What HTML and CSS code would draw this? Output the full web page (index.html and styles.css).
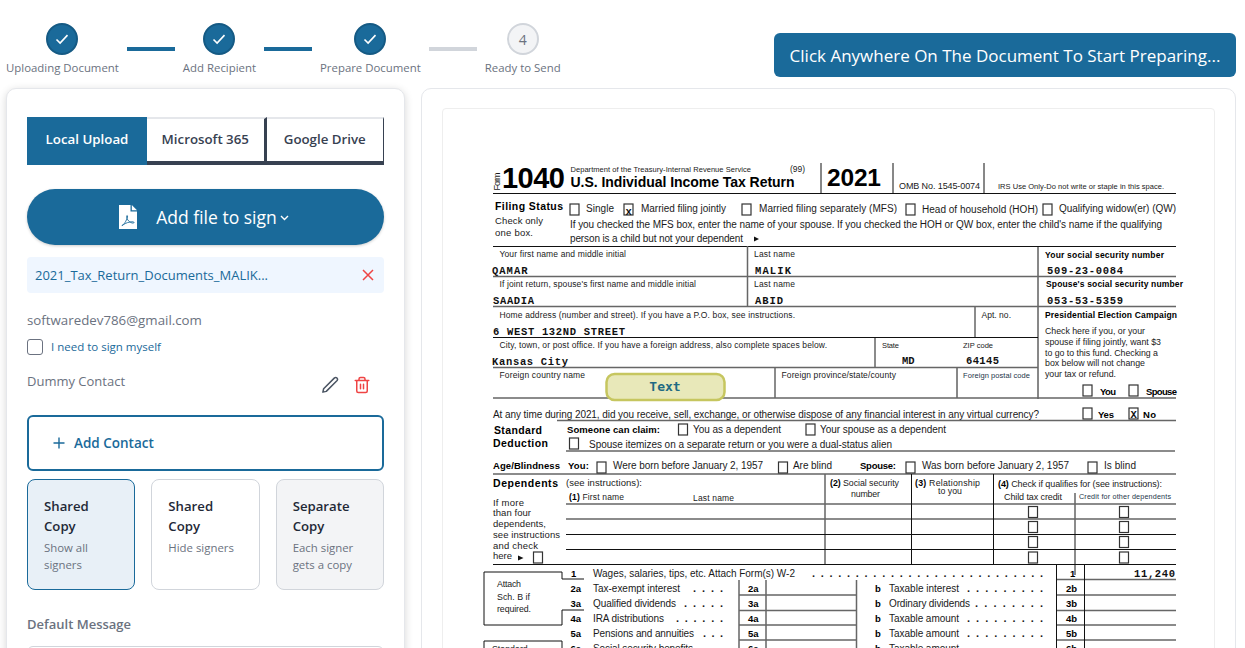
FILE: index.html
```html
<!DOCTYPE html>
<html lang="en">
	<head>
		<meta charset="UTF-8" />
		<meta name="viewport" content="width=device-width, initial-scale=1.0" />
		<title>Prepare Document</title>
		<link rel="stylesheet" href="styles.css">
	</head>
	<body>
		<header class="topbar">
			<ol class="stepper">
				<li class="step">
					<span class="step-dot"><svg width="14" height="14" viewBox="0 0 14 14"><path d="M1.5 7.5l3.6 3.6 7.4-8" /></svg></span>
					<span class="step-label">Uploading Document</span>
				</li>
				<li class="step-line"></li>
				<li class="step">
					<span class="step-dot"><svg width="14" height="14" viewBox="0 0 14 14"><path d="M1.5 7.5l3.6 3.6 7.4-8" /></svg></span>
					<span class="step-label">Add Recipient</span>
				</li>
				<li class="step-line"></li>
				<li class="step">
					<span class="step-dot"><svg width="14" height="14" viewBox="0 0 14 14"><path d="M1.5 7.5l3.6 3.6 7.4-8" /></svg></span>
					<span class="step-label">Prepare Document</span>
				</li>
				<li class="step-line step-line-todo"></li>
				<li class="step">
					<span class="step-dot step-dot-todo">4</span>
					<span class="step-label">Ready to Send</span>
				</li>
			</ol>
			<button class="hint-button">Click Anywhere On The Document To Start Preparing...</button>
		</header>

		<main class="workspace">
			<aside class="panel side">
				<div class="tabs">
					<button class="tab tab-active">Local Upload</button>
					<button class="tab">Microsoft 365</button>
					<button class="tab">Google Drive</button>
				</div>

				<button class="add-file">
					<svg class="pdf-icon" width="18" height="24" viewBox="0 0 18 24">
						<path class="pdf-sheet" d="M0 0h11.5v6.500h6.500v17.500h-18z" />
						<path class="pdf-sheet" d="M12.800 0l5.200 5.200h-5.200z" />
						<path class="pdf-mark" d="M3 20.500c2-.8 4.300-4.500 5.500-8.500.5-1.800-.9-2-.9-.4 0 3 3.400 6.300 6.300 6.500 1.500.1 1.500-1.200 0-1.300-3.600-.2-7.400 1.300-9.700 3-1 .8-1.600.8-1.200.7z" />
					</svg>
					<span>Add file to sign</span>
					<svg class="chevron" width="9" height="6" viewBox="0 0 9 6"><path d="M1 1l3.500 3.500L8 1" /></svg>
				</button>

				<div class="file-row">
					<span class="file-name">2021_Tax_Return_Documents_MALIK...</span>
					<svg class="file-remove" width="12" height="12" viewBox="0 0 12 12"><path d="M1 1l10 10M11 1L1 11" /></svg>
				</div>

				<div class="email">softwaredev786@gmail.com</div>
				<label class="self-sign">
					<span class="checkbox"></span>
					<span class="self-sign-text">I need to sign myself</span>
				</label>

				<div class="contact">
					<span class="contact-name">Dummy Contact</span>
					<span class="contact-actions">
						<svg class="icon-edit" width="18" height="18" viewBox="0 0 24 24"><path d="M18 2.500a2.500 2.500 0 0 1 3.500 3.500L7 20.500 2.500 21.500 3.500 17z" /></svg>
						<svg class="icon-trash" width="18" height="18" viewBox="0 0 24 24"><path d="M3 6h18M8 6V4a2 2 0 0 1 2-2h4a2 2 0 0 1 2 2v2M19 6v14a2 2 0 0 1-2 2H7a2 2 0 0 1-2-2V6M10 11v6M14 11v6" /></svg>
					</span>
				</div>

				<button class="add-contact">
					<svg width="12" height="12" viewBox="0 0 12 12"><path d="M6 .5v11M.5 6h11" /></svg>
					<span>Add Contact</span>
				</button>

				<div class="copy-options">
					<div class="copy-card copy-card-active">
						<div class="copy-title">Shared Copy</div>
						<div class="copy-text">Show all signers</div>
					</div>
					<div class="copy-card">
						<div class="copy-title">Shared Copy</div>
						<div class="copy-text">Hide signers</div>
					</div>
					<div class="copy-card copy-card-muted">
						<div class="copy-title">Separate Copy</div>
						<div class="copy-text">Each signer gets a copy</div>
					</div>
				</div>

				<div class="field-label">Default Message</div>
				<div class="message-box"></div>
			</aside>

			<section class="panel viewer">
				<div class="sheet">
					<!-- the viewBox uses window coordinates, the form is a free canvas -->
					<svg class="form" width="771" height="539" viewBox="443 109 771 539">
						<!-- heavy rules -->
						<g class="rule">
							<path d="M493 193.500H1176M821 163V194M893 163V194M984 163V194M493 246.500H1176" />
							<path d="M493 337.500H1038M1038 246V399M957 368V398" />
							<path d="M562 572H484V625H562V610H584M562 572V579H584M484 648V641H562V648" />
						</g>
						<!-- grey rules -->
						<g class="rule-soft">
							<path d="M493 276.500H1176M493 306.500H1176M747.500 246V307M975 307V337M875 338V367M493 367.500H1038M775 368V398M493 398H1176" />
							<path d="M557 420.500H1176M566 451H1175M493 474H1176" />
							<path d="M566 504H1176M566 519H1176M825 474V565M1075 493V575" />
							<path d="M739 580V648M766 580V648M856.500 580V648M739 595H857M739 610.500H857M739 625H857M739 640H857" />
							<path d="M1057 595H1176M1057 610.500H1176M1057 625H1176M1057 640H1176M1057 579.500H1176" />
						</g>
						<g class="rule">
							<path d="M566 534.500H1176M566 549.500H1176M493 564.500H1176M911.500 474V565M993.500 474V565M1056.500 565V648M1084.500 565V648" />
						</g>

						<!-- header -->
						<text class="f" font-size="9" transform="translate(499.500 190.500) rotate(-90)" textLength="18">Form</text>
						<text class="f b" x="502" y="188" font-size="29" textLength="63">1040</text>
						<text class="f" x="570.500" y="172" font-size="7.500" textLength="180.500">Department of the Treasury-Internal Revenue Service</text>
						<text class="f" x="790" y="172" font-size="8.500" textLength="15">(99)</text>
						<text class="f b" x="570.500" y="186.500" font-size="14" textLength="224">U.S. Individual Income Tax Return</text>
						<text class="f b" x="827" y="186" font-size="24.500" textLength="54">2021</text>
						<text class="f" x="899" y="189" font-size="9" textLength="81">OMB No. 1545-0074</text>
						<text class="f" x="998" y="189" font-size="7.500" textLength="166">IRS Use Only-Do not write or staple in this space.</text>

						<!-- filing status -->
						<text class="f b" x="495" y="210" font-size="10.500" textLength="68">Filing Status</text>
						<text class="f" x="495" y="224" font-size="9.500" textLength="48">Check only</text>
						<text class="f" x="495" y="236" font-size="9.500" textLength="38">one box.</text>
						<text class="f" x="586" y="212" font-size="10" textLength="28">Single</text>
						<text class="f" x="641" y="212" font-size="10" textLength="85">Married filing jointly</text>
						<text class="f" x="759" y="212" font-size="10" textLength="138">Married filing separately (MFS)</text>
						<text class="f" x="922" y="213" font-size="10" textLength="116">Head of household (HOH)</text>
						<text class="f" x="1059" y="212" font-size="10" textLength="117">Qualifying widow(er) (QW)</text>
						<text class="f" x="570" y="228" font-size="10" textLength="592">If you checked the MFS box, enter the name of your spouse. If you checked the HOH or QW box, enter the child's name if the qualifying</text>
						<text class="f" x="570" y="242" font-size="10" textLength="173">person is a child but not your dependent</text>
						<path class="mark" d="M754 236.500l5 2.500-5 2.500z" />

						<!-- names -->
						<text class="f" x="499.500" y="257" font-size="8.500" textLength="126.500">Your first name and middle initial</text>
						<text class="f" x="754" y="257" font-size="8.500" textLength="41">Last name</text>
						<text class="f b" x="1045" y="257.500" font-size="8.500" textLength="119">Your social security number</text>
						<text class="m" x="492" y="274" textLength="35.500">QAMAR</text>
						<text class="m" x="755" y="274" textLength="36">MALIK</text>
						<text class="m" x="1047" y="274" textLength="76">509-23-0084</text>
						<text class="f" x="499.500" y="287" font-size="8.500" textLength="196.500">If joint return, spouse's first name and middle initial</text>
						<text class="f" x="754" y="287" font-size="8.500" textLength="41">Last name</text>
						<text class="f b" x="1046" y="287" font-size="8.500" textLength="137">Spouse's social security number</text>
						<text class="m" x="493" y="304" textLength="41">SAADIA</text>
						<text class="m" x="755" y="304" textLength="28">ABID</text>
						<text class="m" x="1047" y="304" textLength="76">053-53-5359</text>

						<!-- address -->
						<text class="f" x="499.500" y="317.500" font-size="8.500" textLength="295.500">Home address (number and street). If you have a P.O. box, see instructions.</text>
						<text class="f" x="981.500" y="318" font-size="8.500" textLength="29.500">Apt. no.</text>
						<text class="f b" x="1045" y="318" font-size="8.500" textLength="132">Presidential Election Campaign</text>
						<text class="m" x="493" y="335" textLength="132">6 WEST 132ND STREET</text>
						<text class="f" x="1045" y="334" font-size="8.800" textLength="100">Check here if you, or your</text>
						<text class="f" x="1045" y="345" font-size="8.800" textLength="116">spouse if filing jointly, want $3</text>
						<text class="f" x="1045" y="355.500" font-size="8.800" textLength="113">to go to this fund. Checking a</text>
						<text class="f" x="1045" y="366" font-size="8.800" textLength="100">box below will not change</text>
						<text class="f" x="1045" y="377" font-size="8.800" textLength="71">your tax or refund.</text>
						<text class="f" x="499.500" y="347.500" font-size="8.500" textLength="327.500">City, town, or post office. If you have a foreign address, also complete spaces below.</text>
						<text class="f" x="882" y="347.500" font-size="7.500" textLength="17">State</text>
						<text class="f" x="963" y="347.500" font-size="7.500" textLength="30">ZIP code</text>
						<text class="m" x="492" y="365" textLength="76">Kansas City</text>
						<text class="m" x="902" y="364">MD</text>
						<text class="m" x="966" y="364" textLength="33">64145</text>
						<text class="f" x="499.500" y="377.500" font-size="8.500" textLength="85.500">Foreign country name</text>
						<text class="f" x="781.500" y="377.500" font-size="8.500" textLength="114.500">Foreign province/state/county</text>
						<text class="f blue" x="963" y="377.500" font-size="7.500" textLength="67">Foreign postal code</text>
						<text class="f b" x="1100" y="395" font-size="9.500" textLength="16">You</text>
						<text class="f b" x="1146" y="395" font-size="9.500" textLength="31">Spouse</text>

						<!-- digital asset question -->
						<text class="f" x="493" y="418" font-size="10" textLength="546">At any time during 2021, did you receive, sell, exchange, or otherwise dispose of any financial interest in any virtual currency?</text>
						<text class="f b" x="1098" y="418" font-size="9.500" textLength="16">Yes</text>
						<text class="f b" x="1143" y="418" font-size="9.500" textLength="13">No</text>

						<!-- standard deduction -->
						<text class="f b" x="494" y="434" font-size="10.500" textLength="48">Standard</text>
						<text class="f b" x="493" y="446.500" font-size="10.500" textLength="55">Deduction</text>
						<text class="f b" x="567" y="433" font-size="9.500" textLength="93">Someone can claim:</text>
						<text class="f" x="693" y="433" font-size="10" textLength="88">You as a dependent</text>
						<text class="f" x="820" y="433" font-size="10" textLength="126">Your spouse as a dependent</text>
						<text class="f" x="589" y="448" font-size="10" textLength="303">Spouse itemizes on a separate return or you were a dual-status alien</text>

						<!-- age and blindness -->
						<text class="f b" x="493" y="469" font-size="9.500" textLength="67">Age/Blindness</text>
						<text class="f b" x="568" y="469" font-size="9.500" textLength="21">You:</text>
						<text class="f" x="613" y="469" font-size="10" textLength="150">Were born before January 2, 1957</text>
						<text class="f" x="793" y="469" font-size="10" textLength="39">Are blind</text>
						<text class="f b" x="860" y="469" font-size="9.500" textLength="36">Spouse:</text>
						<text class="f" x="922" y="469" font-size="10" textLength="147">Was born before January 2, 1957</text>
						<text class="f" x="1104" y="469" font-size="10" textLength="32">Is blind</text>

						<!-- dependents -->
						<text class="f b" x="493" y="487" font-size="10.500" textLength="65">Dependents</text>
						<text class="f" x="566" y="486" font-size="9.500" textLength="76">(see instructions):</text>
						<text class="f" x="569" y="500" font-size="8.500" textLength="55"><tspan class="b">(1)</tspan> First name</text>
						<text class="f" x="693" y="501" font-size="8.500" textLength="41">Last name</text>
						<text class="f" x="493" y="506" font-size="9.500" textLength="31">If more</text>
						<text class="f" x="493" y="516" font-size="9.500" textLength="38">than four</text>
						<text class="f" x="493" y="527" font-size="9.500" textLength="53">dependents,</text>
						<text class="f" x="493" y="538" font-size="9.500" textLength="67">see instructions</text>
						<text class="f" x="493" y="549" font-size="9.500" textLength="45">and check</text>
						<text class="f" x="493" y="559" font-size="9.500" textLength="19">here</text>
						<path class="mark" d="M518 555.500l5.500 2.500-5.500 2.500z" />
						<text class="f" x="830" y="486" font-size="8.800" textLength="69"><tspan class="b">(2)</tspan> Social security</text>
						<text class="f" x="851" y="497" font-size="8.800" textLength="29">number</text>
						<text class="f" x="915" y="486" font-size="8.800" textLength="65"><tspan class="b">(3)</tspan>  Relationship</text>
						<text class="f" x="938" y="494" font-size="8.800" textLength="24">to you</text>
						<text class="f" x="998" y="487" font-size="9" textLength="164"><tspan class="b">(4)</tspan> Check if qualifies for (see instructions):</text>
						<text class="f" x="1004" y="500" font-size="9" textLength="58">Child tax credit</text>
						<text class="f blue" x="1079" y="499" font-size="7.200" textLength="92">Credit for other dependents</text>

						<!-- income -->
						<text class="f" x="497" y="587" font-size="8.800" textLength="24">Attach</text>
						<text class="f" x="497" y="599.500" font-size="8.800" textLength="33">Sch. B if</text>
						<text class="f" x="497" y="612" font-size="8.800" textLength="34">required.</text>
						<text class="f" x="492" y="652" font-size="8.800">Standard</text>

						<text class="f b" x="571" y="577" font-size="9.500">1</text>
						<text class="f b" x="570.500" y="592" font-size="9.500">2a</text>
						<text class="f b" x="570.500" y="607" font-size="9.500">3a</text>
						<text class="f b" x="570.500" y="622" font-size="9.500">4a</text>
						<text class="f b" x="570.500" y="637" font-size="9.500">5a</text>
						<text class="f b" x="570.500" y="652" font-size="9.500">6a</text>

						<text class="f" x="593" y="577" font-size="10" textLength="202">Wages, salaries, tips, etc. Attach Form(s) W-2</text>
						<text class="f" x="593" y="592" font-size="10" textLength="87">Tax-exempt interest</text>
						<text class="f" x="593" y="607" font-size="10" textLength="83">Qualified dividends</text>
						<text class="f" x="593" y="622" font-size="10" textLength="71">IRA distributions</text>
						<text class="f" x="593" y="637" font-size="10" textLength="101">Pensions and annuities</text>
						<text class="f" x="593" y="652" font-size="10" textLength="100">Social security benefits</text>

						<text class="f dots" x="812" y="577" textLength="231">. . . . . . . . . . . . . . . . . . . . . . . . . . .</text>
						<text class="f dots" x="693" y="592" textLength="30">. . . .</text>
						<text class="f dots" x="684" y="607" textLength="39">. . . . .</text>
						<text class="f dots" x="676" y="622" textLength="47">. . . . . .</text>
						<text class="f dots" x="703" y="637" textLength="20">. . .</text>
						<text class="f dots" x="967" y="592" textLength="76">. . . . . . . . .</text>
						<text class="f dots" x="975" y="607" textLength="68">. . . . . . . .</text>
						<text class="f dots" x="967" y="622" textLength="76">. . . . . . . . .</text>
						<text class="f dots" x="967" y="637" textLength="76">. . . . . . . . .</text>

						<text class="f b" x="748" y="592" font-size="9.500">2a</text>
						<text class="f b" x="748" y="607" font-size="9.500">3a</text>
						<text class="f b" x="748" y="622" font-size="9.500">4a</text>
						<text class="f b" x="748" y="637" font-size="9.500">5a</text>
						<text class="f b" x="748" y="652" font-size="9.500">6a</text>

						<text class="f b" x="875" y="592" font-size="9.500">b</text>
						<text class="f b" x="875" y="607" font-size="9.500">b</text>
						<text class="f b" x="875" y="622" font-size="9.500">b</text>
						<text class="f b" x="875" y="637" font-size="9.500">b</text>
						<text class="f b" x="875" y="652" font-size="9.500">b</text>
						<text class="f" x="889" y="592" font-size="10" textLength="70">Taxable interest</text>
						<text class="f" x="889" y="607" font-size="10" textLength="81">Ordinary dividends</text>
						<text class="f" x="889" y="622" font-size="10" textLength="70">Taxable amount</text>
						<text class="f" x="889" y="637" font-size="10" textLength="70">Taxable amount</text>
						<text class="f" x="889" y="652" font-size="10" textLength="70">Taxable amount</text>

						<text class="f b" x="1070" y="577" font-size="9.500">1</text>
						<text class="f b" x="1066" y="592" font-size="9.500">2b</text>
						<text class="f b" x="1066" y="607" font-size="9.500">3b</text>
						<text class="f b" x="1066" y="622" font-size="9.500">4b</text>
						<text class="f b" x="1066" y="637" font-size="9.500">5b</text>
						<text class="f b" x="1066" y="652" font-size="9.500">6b</text>
						<text class="m" x="1134" y="577" textLength="41">11,240</text>

						<!-- checkboxes -->
						<g class="box">
							<rect x="570" y="204" width="9" height="11" />
							<rect x="624" y="204" width="9" height="11" />
							<rect x="742" y="204" width="9" height="11" />
							<rect x="906" y="204" width="9" height="11" />
							<rect x="1043" y="204" width="9" height="11" />
							<rect x="1083" y="385" width="9" height="11" />
							<rect x="1129" y="385" width="9" height="11" />
							<rect x="1083" y="408" width="9" height="11" />
							<rect x="1129" y="408" width="9" height="11" />
							<rect x="678.500" y="424" width="9" height="11" />
							<rect x="806" y="424" width="9" height="11" />
							<rect x="569.500" y="438" width="9" height="11" />
							<rect x="597" y="462" width="9" height="11" />
							<rect x="778.500" y="462" width="9" height="11" />
							<rect x="906" y="462" width="9" height="11" />
							<rect x="1088" y="462" width="9" height="11" />
							<rect x="533.500" y="552" width="9" height="11" />
							<rect x="1028.500" y="506.500" width="9" height="11" />
							<rect x="1028.500" y="521.500" width="9" height="11" />
							<rect x="1028.500" y="536.500" width="9" height="11" />
							<rect x="1028.500" y="552" width="9" height="11" />
							<rect x="1119.500" y="506.500" width="9" height="11" />
							<rect x="1119.500" y="521.500" width="9" height="11" />
							<rect x="1119.500" y="536.500" width="9" height="11" />
							<rect x="1119.500" y="552" width="9" height="11" />
						</g>
						<text class="m" x="625.500" y="214.500">x</text>
						<text class="m" x="1130.500" y="417.500">X</text>

						<!-- placed text field -->
						<rect class="text-field" x="606.500" y="374" width="118" height="26" rx="8" />
						<text class="text-field-label" x="665" y="390.500">Text</text>
					</svg>
				</div>
			</section>
		</main>
	</body>
</html>
```

FILE: styles.css
```css
* {
	box-sizing: border-box;
}
html,
body {
	height: 100%;
}
body {
	margin: 0;
	overflow: hidden;
	background-color: #fff;
	color: #374151;
	font-family: 'Open Sans', 'Noto Sans', sans-serif;
}
button {
	border: 0;
	font: inherit;
}

/* top bar */
.topbar {
	display: flex;
	justify-content: space-between;
	height: 88px;
	padding: 23px 9px 0 6px;
}
.stepper {
	display: flex;
	align-items: flex-start;
	gap: 8px;
	margin: 0;
	padding: 0;
	list-style: none;
}
.step {
	display: flex;
	flex-direction: column;
	align-items: center;
	gap: 5px;
}
.step-dot {
	display: flex;
	align-items: center;
	justify-content: center;
	width: 32px;
	height: 32px;
	border: 2px solid #155a84;
	border-radius: 50%;
	background-color: #1a6a9a;
	font-size: 14px;
}
.step-dot svg {
	fill: none;
	stroke: #fff;
	stroke-width: 1.6;
}
.step-dot-todo {
	border-color: #d1d5db;
	background-color: #f3f4f6;
	color: #6b7280;
}
.step-label {
	color: #6b7280;
	font-size: 11.400px;
	line-height: 16px;
	white-space: nowrap;
}
.step-line {
	width: 48px;
	height: 4px;
	margin-top: 24px;
	background-color: #1a6a9a;
}
.step-line-todo {
	background-color: #d1d5db;
}
.hint-button {
	width: 462px;
	height: 44px;
	margin-top: 10px;
	border-radius: 6px;
	background-color: #1a6a9a;
	color: #fff;
	font-size: 17px;
}

/* panels */
.workspace {
	display: flex;
	gap: 16px;
	padding: 0 9px 0 6px;
}
.panel {
	height: 640px;
	border: 1px solid #e5e7eb;
	border-radius: 10px;
	background-color: #fff;
}
.side {
	flex: none;
	width: 399px;
	padding: 28px 20px;
	box-shadow: 0 2px 8px rgba(0, 0, 0, 0.16);
}
.viewer {
	flex: 1;
	padding: 19px 20px;
}
.sheet {
	height: 620px;
	border: 1px solid #eee;
	border-radius: 4px;
}
.form {
	display: block;
}

/* source tabs */
.tabs {
	display: flex;
	height: 48px;
}
.tab {
	flex: 1;
	padding-bottom: 4px;
	border-top: 2px solid #e5e7eb;
	border-right: 3px solid #374151;
	border-bottom: 4px solid #374151;
	background-color: #fff;
	color: #374151;
	font-size: 13.300px;
	font-weight: 600;
}
.tab:last-child {
	border-right-width: 1px;
}
.tab-active {
	flex: none;
	width: 120px;
	padding-bottom: 6px;
	border: 0;
	background-color: #1a6a9a;
	color: #fff;
}

/* upload */
.add-file {
	display: flex;
	align-items: center;
	justify-content: center;
	width: 100%;
	height: 56px;
	margin-top: 24px;
	padding: 0 3px 0 0;
	border-radius: 28px;
	background-color: #1a6a9a;
	box-shadow: 0 1px 3px rgba(0, 0, 0, 0.2);
	color: #fff;
	font-size: 17.500px;
}
.pdf-icon {
	margin: 0 19px 0 0;
}
.pdf-sheet {
	fill: #fff;
}
.pdf-mark {
	fill: none;
	stroke: #1a6a9a;
	stroke-width: 0.9;
}
.chevron {
	margin: 2px 0 0 3px;
	fill: none;
	stroke: #fff;
	stroke-width: 1.4;
}
.file-row {
	display: flex;
	align-items: center;
	justify-content: space-between;
	height: 36px;
	margin-top: 12px;
	padding: 0 10px 0 8px;
	border-radius: 4px;
	background-color: #eff6ff;
}
.file-name {
	color: #1a6a9a;
	font-size: 13px;
}
.file-remove {
	fill: none;
	stroke: #ef4444;
	stroke-width: 1.5;
}
.email {
	margin-top: 17px;
	color: #6b7280;
	font-size: 13.300px;
	line-height: 20px;
}
.self-sign {
	display: flex;
	align-items: center;
	gap: 8px;
	margin-top: 8px;
	color: #1a6a9a;
	font-size: 11.500px;
	line-height: 16px;
}
.self-sign-text {
	padding-top: 1px;
}
.checkbox {
	width: 16px;
	height: 16px;
	border: 1px solid #6b7280;
	border-radius: 3px;
	background-color: #fff;
}
.contact {
	display: flex;
	justify-content: space-between;
	height: 60px;
	padding-top: 16px;
	color: #6b7280;
	font-size: 13px;
	line-height: 20px;
}
.contact-actions {
	display: flex;
	gap: 14px;
	margin: 5px 13px 0 0;
}
.icon-edit,
.icon-trash {
	fill: none;
	stroke-width: 2;
	stroke-linecap: round;
	stroke-linejoin: round;
}
.icon-edit {
	stroke: #4b5563;
}
.icon-trash {
	stroke: #ef4444;
}
.add-contact {
	display: flex;
	align-items: center;
	gap: 9px;
	width: 100%;
	height: 56px;
	padding-left: 24px;
	border: 2px solid #1a6a9a;
	border-radius: 6px;
	background-color: #fff;
	color: #1a6a9a;
	font-size: 13.500px;
	font-weight: 600;
}
.add-contact svg {
	fill: none;
	stroke: #1a6a9a;
	stroke-width: 1.4;
}

/* copy options */
.copy-options {
	display: grid;
	grid-template-columns: repeat(3, 1fr);
	gap: 16px;
	height: 110px;
	margin-top: 8px;
}
.copy-card {
	padding: 16px;
	border: 1px solid #d1d5db;
	border-radius: 8px;
}
.copy-card-active {
	border-color: #1a6a9a;
	background-color: #e8f0f7;
}
.copy-card-muted {
	background-color: #f3f4f6;
}
.copy-title {
	color: #1f2937;
	font-size: 13.200px;
	font-weight: 600;
	line-height: 20px;
}
.copy-text {
	margin-top: 4px;
	color: #6b7280;
	font-size: 11.400px;
	line-height: 16.500px;
}
.field-label {
	margin-top: 25px;
	color: #6b7280;
	font-size: 13px;
	font-weight: 600;
	line-height: 20px;
}
.message-box {
	height: 80px;
	margin-top: 12px;
	border: 1px solid #d1d5db;
	border-radius: 6px;
}

/* tax form drawing */
.rule,
.rule-soft {
	fill: none;
}
.rule {
	stroke: #111;
	stroke-width: 1;
}
.rule-soft {
	stroke: #666;
	stroke-width: 1.500;
}
.f {
	fill: #1a1a1a;
	font-family: 'Liberation Sans', Arial, sans-serif;
}
.b {
	fill: #000;
	font-weight: 700;
}
.blue {
	fill: #24354a;
}
.m {
	fill: #111;
	font-family: 'Liberation Mono', 'Courier New', monospace;
	font-size: 10.500px;
	font-weight: 700;
}
.mark {
	fill: #111;
}
.dots {
	font-size: 11px;
	font-weight: 700;
}
.box {
	fill: #fff;
	stroke: #333;
	stroke-width: 1.200;
}
.text-field {
	fill: #e8e8b9;
	stroke: #c6c65f;
	stroke-width: 2.500;
}
.text-field-label {
	fill: #1f6a83;
	font-family: 'DejaVu Sans Mono', monospace;
	font-size: 13px;
	font-weight: 700;
	text-anchor: middle;
}
```
